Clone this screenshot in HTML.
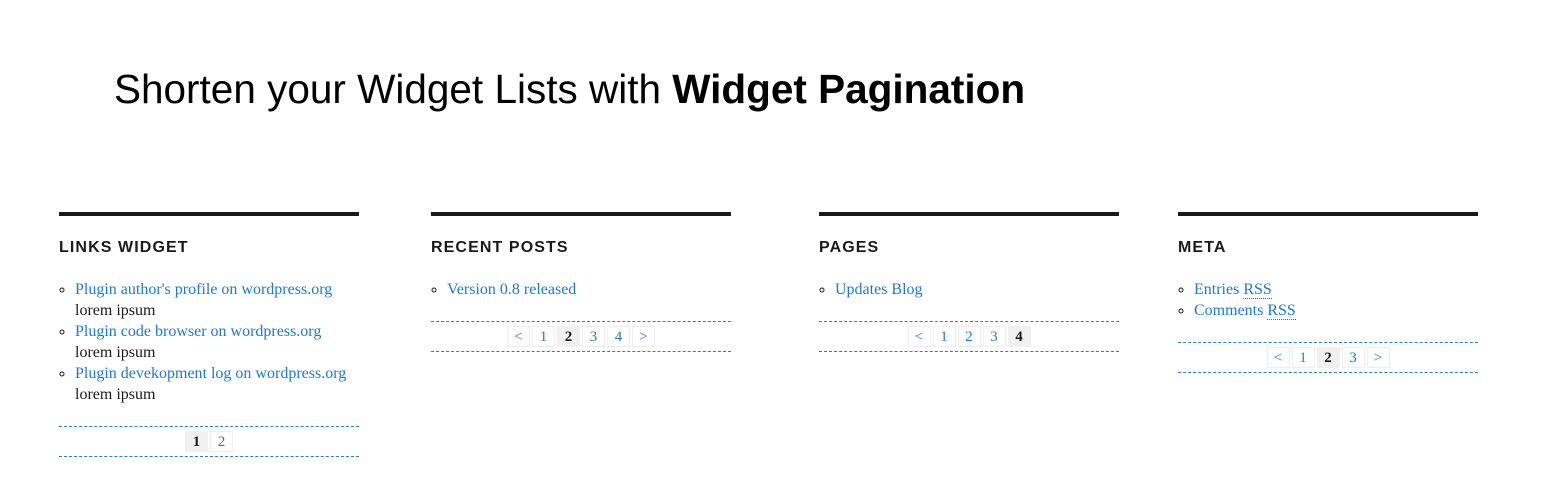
<!DOCTYPE html>
<html><head><style>
body{margin:0;width:1544px;height:500px;background:#fff;position:relative;font-family:"Liberation Serif",serif;overflow:hidden}
h1{position:absolute;left:114px;top:65px;margin:0;font:normal 40.5px/1.2 "Liberation Sans",sans-serif;color:#000;white-space:nowrap}
h1 b{font-weight:bold}
.w{position:absolute;top:212px;width:300px;border-top:4px solid #1a1a1a}
.w h2{margin:0;position:absolute;top:24px;left:0;font:bold 16px/1 "Liberation Sans",sans-serif;letter-spacing:1.1px;color:#1a1a1a}
.w ul{position:absolute;top:63px;left:0;margin:0;padding:0 0 0 16px;list-style:circle;font-size:16px;line-height:21px;color:#1a1a1a;width:300px;white-space:nowrap}
a{color:#1e7ac7;text-decoration:none}
abbr{border-bottom:1px dotted #1e7ac7}
.p{position:absolute;left:0;width:300px;border-top:1px dashed #2d7bc4;border-bottom:1px dashed #2d7bc4;height:29px;text-align:center;font-size:15px}
.p span{display:inline-block;box-sizing:border-box;width:23px;height:21px;line-height:20px;margin:4px 1px 0;border:1px solid #eee;color:#1e7ac7;vertical-align:top}
.p span.c{background:#f0f0f0;border-color:#f0f0f0;color:#1a1a1a;font-weight:bold}
</style></head><body>
<h1>Shorten your Widget Lists with <b>Widget Pagination</b></h1>

<div class="w" style="left:59px">
<h2>LINKS WIDGET</h2>
<ul>
<li><a>Plugin author's profile on wordpress.org</a><br>lorem ipsum</li>
<li><a>Plugin code browser on wordpress.org</a><br>lorem ipsum</li>
<li><a>Plugin devekopment log on wordpress.org</a><br>lorem ipsum</li>
</ul>
<div class="p" style="top:210px"><span class="c">1</span><span>2</span></div>
</div>

<div class="w" style="left:431px">
<h2>RECENT POSTS</h2>
<ul><li><a>Version 0.8 released</a></li></ul>
<div class="p" style="top:105px"><span>&lt;</span><span>1</span><span class="c">2</span><span>3</span><span>4</span><span>&gt;</span></div>
</div>

<div class="w" style="left:819px">
<h2>PAGES</h2>
<ul><li><a>Updates Blog</a></li></ul>
<div class="p" style="top:105px"><span>&lt;</span><span>1</span><span>2</span><span>3</span><span class="c">4</span></div>
</div>

<div class="w" style="left:1178px">
<h2>META</h2>
<ul><li><a>Entries <abbr>RSS</abbr></a></li><li><a>Comments <abbr>RSS</abbr></a></li></ul>
<div class="p" style="top:126px"><span>&lt;</span><span>1</span><span class="c">2</span><span>3</span><span>&gt;</span></div>
</div>
</body></html>
